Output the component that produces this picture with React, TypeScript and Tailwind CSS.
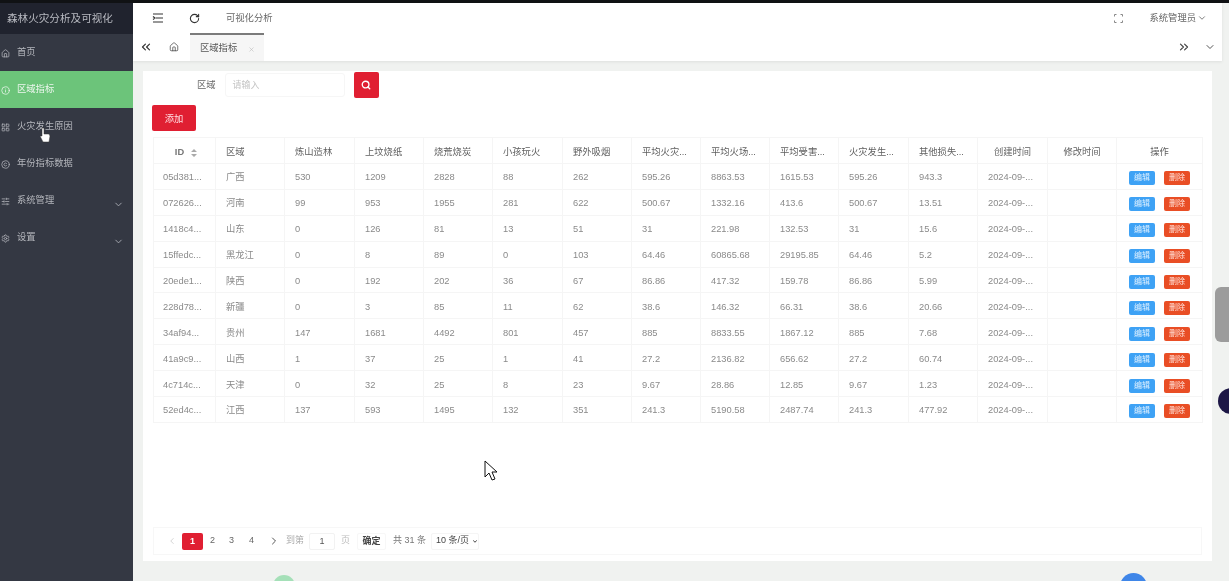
import {ChevronDown, ChevronLeft, ChevronRight, ChevronsLeft, ChevronsRight, Copyright, Home, Info, LayoutGrid, RotateCw, Search, Settings, SlidersHorizontal, X} from "lucide-react"

const font = "[font-family:'Liberation_Sans','Noto_Sans_CJK_SC',sans-serif]"

const menu = [
    {label: "首页", icon: Home},
    {label: "区域指标", icon: Info, active: true},
    {label: "火灾发生原因", icon: LayoutGrid},
    {label: "年份指标数据", icon: Copyright},
    {label: "系统管理", icon: SlidersHorizontal, arrow: true},
    {label: "设置", icon: Settings, arrow: true},
]

const columns = [
    {title: "ID", width: 62},
    {title: "区域", width: 69},
    {title: "炼山造林", width: 70},
    {title: "上坟烧纸", width: 69},
    {title: "烧荒烧炭", width: 69},
    {title: "小孩玩火", width: 70},
    {title: "野外吸烟", width: 69},
    {title: "平均火灾...", width: 69},
    {title: "平均火场...", width: 69},
    {title: "平均受害...", width: 69},
    {title: "火灾发生...", width: 70},
    {title: "其他损失...", width: 69},
    {title: "创建时间", width: 70, center: true},
    {title: "修改时间", width: 69, center: true},
    {title: "操作", width: 86, center: true},
]

const rows = [
    ["05d381...", "广西", "530", "1209", "2828", "88", "262", "595.26", "8863.53", "1615.53", "595.26", "943.3"],
    ["072626...", "河南", "99", "953", "1955", "281", "622", "500.67", "1332.16", "413.6", "500.67", "13.51"],
    ["1418c4...", "山东", "0", "126", "81", "13", "51", "31", "221.98", "132.53", "31", "15.6"],
    ["15ffedc...", "黑龙江", "0", "8", "89", "0", "103", "64.46", "60865.68", "29195.85", "64.46", "5.2"],
    ["20ede1...", "陕西", "0", "192", "202", "36", "67", "86.86", "417.32", "159.78", "86.86", "5.99"],
    ["228d78...", "新疆", "0", "3", "85", "11", "62", "38.6", "146.32", "66.31", "38.6", "20.66"],
    ["34af94...", "贵州", "147", "1681", "4492", "801", "457", "885", "8833.55", "1867.12", "885", "7.68"],
    ["41a9c9...", "山西", "1", "37", "25", "1", "41", "27.2", "2136.82", "656.62", "27.2", "60.74"],
    ["4c714c...", "天津", "0", "32", "25", "8", "23", "9.67", "28.86", "12.85", "9.67", "1.23"],
    ["52ed4c...", "江西", "137", "593", "1495", "132", "351", "241.3", "5190.58", "2487.74", "241.3", "477.92"],
]

function Sidebar() {
    return (
        <aside className="w-[133px] shrink-0 bg-[#343843] flex flex-col">
            <div className="h-[31px] bg-[#20232e] flex items-center pl-[7px] pt-[1px] text-[10.6px] text-[#b9bbc2] whitespace-nowrap">
                森林火灾分析及可视化
            </div>
            {menu.map((item) => (
                <div
                    key={item.label}
                    className={`h-[37px] flex items-center pl-[1px] pr-[9px] pt-[1px] text-[9.3px] ${item.active ? "bg-[#6cc47a] text-[#eef7ef]" : "text-[#b4b6bc]"}`}
                >
                    <item.icon className="size-[9px] mr-[7px]" strokeWidth={2}/>
                    <span className="flex-1">{item.label}</span>
                    {item.arrow && <ChevronDown className="size-[11px] mt-[7px] text-[#a9acb3]" strokeWidth={2}/>}
                </div>
            ))}
        </aside>
    )
}

function TopBar() {
    return (
        <div className="bg-white shadow-[0_1px_3px_rgba(0,0,0,0.08)]">
            <div className="h-[30px] flex items-center pl-[19px] pr-[15px] text-[#666666]">
                <svg className="text-[#333333]" width="12" height="10" viewBox="0 0 12 10" fill="none" stroke="currentColor" strokeWidth="1.2">
                    <path d="M1 1h10M4 5h7M1 9h10M1 3.5 3 5 1 6.500"/>
                </svg>
                <RotateCw className="size-[11px] ml-[25px] text-[#333333]" strokeWidth={2.4}/>
                <span className="ml-[26px] pt-[2px] text-[9.3px]">可视化分析</span>
                <svg className="ml-auto text-[#888888]" width="9" height="9" viewBox="0 0 9 9" fill="none" stroke="currentColor" strokeWidth="1">
                    <path d="M.5 2.500v-2h2M6.500.5h2v2M.5 6.500v2h2M6.500 8.500h2v-2"/>
                </svg>
                <span className="ml-[27px] pt-[2px] text-[9.3px]">系统管理员</span>
                <ChevronDown className="size-[10px] ml-[1px]" strokeWidth={2}/>
            </div>
            <div className="h-[28px] flex items-center text-[#555555]">
                <ChevronsLeft className="size-[14px] ml-[6px] text-[#333333]" strokeWidth={2}/>
                <Home className="size-[10px] ml-[16px] text-[#444444]" strokeWidth={1.8}/>
                <div className="ml-[11px] w-[74px] h-[28px] bg-[#f6f6f6] border-t-2 border-[#7b7b7b] flex items-center pl-[10px] pt-[2px] text-[9.3px]">
                    区域指标
                    <X className="size-[7px] ml-[11px] text-[#bbbbbb]"/>
                </div>
                <ChevronsRight className="size-[14px] ml-auto text-[#444444]" strokeWidth={2}/>
                <ChevronDown className="size-[12px] ml-[13px] mr-[6px] text-[#555555]" strokeWidth={2}/>
            </div>
        </div>
    )
}

function DataTable() {
    return (
        <table className="table-fixed border-collapse w-[1049px] text-[9.3px] text-[#8a8a8a]">
            <colgroup>
                {columns.map((col) => (
                    <col key={col.title} style={{width: col.width}}/>
                ))}
            </colgroup>
            <thead>
                <tr className="h-[26px] text-[#5f5f5f]">
                    {columns.map((col) => (
                        <th
                            key={col.title}
                            className={`border border-[#f5f5f5] font-normal px-[10px] pt-[4px] whitespace-nowrap ${col.center ? "text-center" : "text-left"}`}
                        >
                            {col.title === "ID" ? (
                                <span className="flex items-center justify-center gap-[7px] pl-[3px] font-bold text-[#777777]">
                                    ID
                                    <svg className="text-[#aaaaaa]" width="6" height="8" viewBox="0 0 6 8" fill="currentColor">
                                        <path d="M3 0 6 3H0zM3 8 0 5h6z"/>
                                    </svg>
                                </span>
                            ) : col.title}
                        </th>
                    ))}
                </tr>
            </thead>
            <tbody>
                {rows.map((row) => (
                    <tr key={row[0]} className="h-[25.9px]">
                        {row.map((cell, i) => (
                            <td key={i} className={`border border-[#f5f5f5] pt-[4px] whitespace-nowrap overflow-hidden ${i === 0 ? "pl-[9px]" : "px-[10px]"}`}>{cell}</td>
                        ))}
                        <td className="border border-[#f5f5f5] px-[10px] pt-[4px] whitespace-nowrap">2024-09-...</td>
                        <td className="border border-[#f5f5f5]"/>
                        <td className="border border-[#f5f5f5] pt-[4px]">
                            <div className="flex justify-center gap-[9px]">
                                <span className="w-[26px] h-[14px] rounded-[2px] bg-[#3ea2f5] text-[#dcefff] text-[8px] leading-[14px] text-center">编辑</span>
                                <span className="w-[26px] h-[14px] rounded-[2px] bg-[#e94e25] text-[#ffe3db] text-[8px] leading-[14px] text-center">删除</span>
                            </div>
                        </td>
                    </tr>
                ))}
            </tbody>
        </table>
    )
}

function Pagination() {
    return (
        <div className="h-[28px] w-[1049px] border border-[#f7f7f7] flex items-center pl-[13px] text-[9px] text-[#8c8c8c] whitespace-nowrap">
            <ChevronLeft className="size-[10px] text-[#cccccc]"/>
            <span className="ml-[5px] w-[21px] h-[17px] rounded-[2px] bg-[#e01f32] text-white font-bold text-center leading-[17px]">1</span>
            <span className="ml-[3px] w-[13px] text-center text-[#666666]">2</span>
            <span className="ml-[6px] w-[13px] text-center text-[#666666]">3</span>
            <span className="ml-[7px] w-[13px] text-center text-[#666666]">4</span>
            <ChevronRight className="size-[12px] ml-[10px] text-[#555555]" strokeWidth={2}/>
            <span className="ml-[6px] text-[#aaaaaa]">到第</span>
            <span className="ml-[5px] w-[26px] h-[17px] rounded-[2px] border border-[#f2f2f2] text-center leading-[15px] text-[#555555]">1</span>
            <span className="ml-[6px] text-[#bbbbbb]">页</span>
            <span className="ml-[7px] w-[29px] h-[17px] rounded-[2px] border border-[#f7f7f7] text-center leading-[15px] text-[#444444] font-bold">确定</span>
            <span className="ml-[7px] text-[#777777]">共 31 条</span>
            <span className="ml-[5px] w-[48px] h-[17px] rounded-[2px] border border-[#f5f5f5] flex items-center pl-[4px] text-[#444444]">
                10 条/页
                <ChevronDown className="size-[9px] ml-[3px] text-[#222222]" strokeWidth={3.5}/>
            </span>
        </div>
    )
}

export default function App() {
    return (
        <div className={`relative w-[1229px] h-[581px] overflow-hidden bg-[#f0f2f0] flex flex-col blur-[0.5px] ${font}`}>
            <div className="h-[3px] bg-[#101214] shrink-0"/>
            <div className="flex flex-1 min-h-0">
                <Sidebar/>
                <main className="w-[1089px] shrink-0 flex flex-col">
                    <TopBar/>
                    <div className="mt-[10px] ml-[10px] w-[1069px] h-[490px] bg-white pt-[1px] px-[10px] flex flex-col">
                        <div className="flex items-center h-[26px]">
                            <span className="ml-[44px] pt-[2px] text-[9.3px] text-[#666666]">区域</span>
                            <div className="ml-[9px] w-[120px] h-[24px] rounded-[3px] border border-[#f6f6f6] pl-[7px] text-[9px] leading-[22px] text-[#c4c4c4]">请输入</div>
                            <div className="ml-[9px] w-[25px] h-[26px] rounded-[2px] bg-[#e01f32] flex items-center justify-center">
                                <Search className="size-[10px] text-white" strokeWidth={3.2}/>
                            </div>
                        </div>
                        <div className="mt-[7px] -ml-[1px] w-[44px] h-[26px] rounded-[2px] bg-[#e01f32] text-[#ffdfe2] text-[9.3px] pt-[3px] flex items-center justify-center">添加</div>
                        <div className="mt-[6px]">
                            <DataTable/>
                        </div>
                        <div className="mt-auto mb-[6px]">
                            <Pagination/>
                        </div>
                    </div>
                </main>
            </div>

            {/* things that sit on top of the page */}
            <div className="absolute left-[1215px] top-[287px] w-[20px] h-[55px] rounded-l-[6px] bg-[#9c9c9c]"/>
            <div className="absolute left-[1218px] top-[388px] w-[26px] h-[26px] rounded-full bg-[#1d1746]"/>
            <div className="absolute left-[273px] top-[575px] w-[22px] h-[22px] rounded-full bg-[#a5e0b8]"/>
            <div className="absolute left-[1120px] top-[573px] w-[27px] h-[27px] rounded-full bg-[#3f86e8]"/>
            <svg className="absolute left-[484px] top-[460px]" width="14" height="22" viewBox="0 0 14 22">
                <path d="M1 1v16l4-4 3 7 3-1-3-7h5z" fill="#ffffff" stroke="#111111" strokeWidth="1"/>
            </svg>
            <svg className="absolute left-[39px] top-[127px]" width="12" height="16" viewBox="0 0 12 16">
                <path d="M3 1h2v6h5l1 2-1 6H4L1 9h2z" fill="#ffffff" stroke="#333333" strokeWidth="0.5"/>
            </svg>
        </div>
    )
}
